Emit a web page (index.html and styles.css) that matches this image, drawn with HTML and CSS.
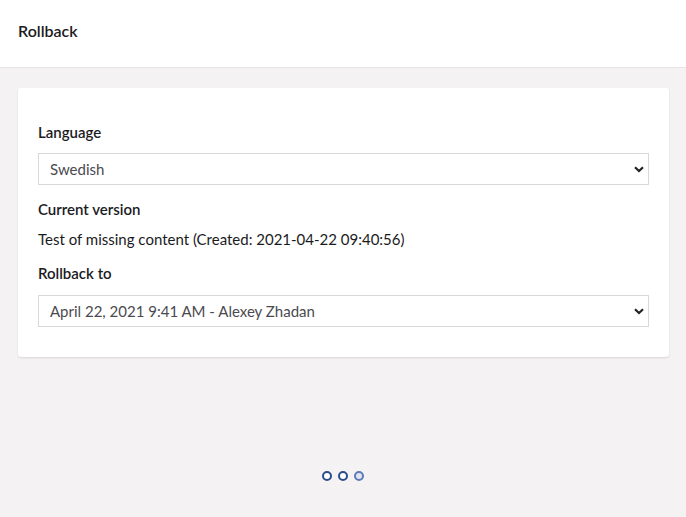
FILE: index.html
```html
<!DOCTYPE html>
<html>
<head>
<meta charset="utf-8">
<link rel="stylesheet" href="styles.css">
</head>
<body>
<header class="header"><h1 class="title">Rollback</h1></header>
<main class="main">
  <section class="card">
    <label class="label first">Language</label>
    <div class="select-wrap">
      <select class="select"><option>Swedish</option></select>
      <svg class="chev" width="10" height="7" viewBox="0 0 10 7"><path d="M1 1.2 L5 5 L9 1.2" fill="none" stroke="#222" stroke-width="2.2"/></svg>
    </div>
    <label class="label">Current version</label>
    <p class="text">Test of missing content (Created: 2021-04-22 09:40:56)</p>
    <label class="label">Rollback to</label>
    <div class="select-wrap">
      <select class="select"><option>April 22, 2021 9:41 AM - Alexey Zhadan</option></select>
      <svg class="chev" width="10" height="7" viewBox="0 0 10 7"><path d="M1 1.2 L5 5 L9 1.2" fill="none" stroke="#222" stroke-width="2.2"/></svg>
    </div>
  </section>
  <div class="loader">
    <span class="dot"></span><span class="dot"></span><span class="dot light"></span>
  </div>
</main>
</body>
</html>
```
FILE: styles.css
```css
html, body {
  margin: 0;
  padding: 0;
  height: 100%;
}
body {
  font-family: Lato, "Open Sans", sans-serif;
  color: #1b1b1e;
  background: #f4f2f2;
  display: flex;
  flex-direction: column;
}
.header {
  background: #fff;
  height: 67px;
  border-bottom: 1px solid #e6e4e4;
  display: flex;
  align-items: center;
  padding: 0 18px;
  box-sizing: content-box;
}
.title {
  margin: 0;
  font-size: 16px;
  font-weight: 600;
  color: #1b1b1e;
  position: relative;
  top: -3px;
}
.main {
  flex: 1;
  padding: 20px 17px 0 18px;
  display: flex;
  flex-direction: column;
}
.card {
  background: #fff;
  border-radius: 3px;
  box-shadow: 0 1px 2px rgba(0,0,0,0.12);
  padding: 34px 20px 30px 20px;
  display: flex;
  flex-direction: column;
}
.label {
  display: block;
  font-size: 15px;
  font-weight: 600;
  line-height: 20px;
  color: #1b1b1e;
  margin: 14px 0 0;
}
.label.first { margin-top: 0; }
.select-wrap {
  position: relative;
  margin-top: 11px;
  height: 32px;
}
.text + .label + .select-wrap { margin-top: 12px; }
.select {
  appearance: none;
  -webkit-appearance: none;
  width: 100%;
  height: 32px;
  box-sizing: border-box;
  border: 1px solid #d8d7d9;
  border-radius: 0;
  background: #fff;
  font-family: Lato, "Open Sans", sans-serif;
  font-size: 15px;
  color: #4a4a4f;
  padding: 0 11px;
  margin: 0;
}
.chev {
  position: absolute;
  right: 5px;
  top: 13px;
  pointer-events: none;
}
.text {
  margin: 10px 0 0;
  font-size: 15px;
  line-height: 20px;
  color: #1b1b1e;
}
.loader {
  display: flex;
  justify-content: center;
  gap: 6px;
  margin-top: 114px;
  padding-right: 2px;
}
.dot {
  width: 10px;
  height: 10px;
  box-sizing: border-box;
  border: 2px solid #2a4d8f;
  border-radius: 50%;
  background: #fff;
}
.dot.light {
  border-color: #5c7bb5;
  background: #dfe6f2;
}
```
